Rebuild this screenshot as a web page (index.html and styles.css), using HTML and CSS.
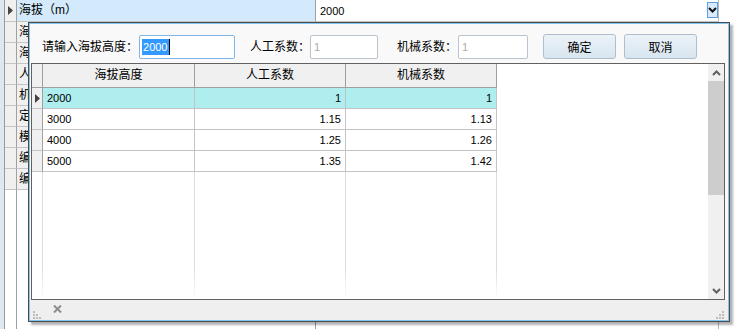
FILE: index.html
```html
<!DOCTYPE html>
<html lang="zh-CN">
<head>
    <meta charset="UTF-8">
    <title>海拔系数</title>
    <link rel="stylesheet" href="styles.css">
</head>
<body>

    <div class="sheet">
        <div class="edge"></div>
        <div class="rh"><svg width="5" height="9" viewBox="0 0 5 9"><path d="M0 0 L5 4.5 L0 9 Z" fill="#444"/></svg></div>
        <div class="c1 sel">海拔（m）</div>
        <div class="c2"><span class="num">2000</span><span class="drop"><svg width="9" height="6" viewBox="0 0 9 6"><path d="M1 1 L4.5 4.5 L8 1" fill="none" stroke="#111" stroke-width="2"/></svg></span></div>

        <div class="edge"></div><div class="rh"></div><div class="c1 ro">海</div><div class="c2"></div>
        <div class="edge"></div><div class="rh"></div><div class="c1 ro">海</div><div class="c2"></div>
        <div class="edge"></div><div class="rh"></div><div class="c1 ro">人</div><div class="c2"></div>
        <div class="edge"></div><div class="rh"></div><div class="c1 ro">机</div><div class="c2"></div>
        <div class="edge"></div><div class="rh"></div><div class="c1 ro">定</div><div class="c2"></div>
        <div class="edge"></div><div class="rh"></div><div class="c1 ro">模</div><div class="c2"></div>
        <div class="edge"></div><div class="rh"></div><div class="c1 ro">编</div><div class="c2"></div>
        <div class="edge"></div><div class="rh"></div><div class="c1 ro">编</div><div class="c2"></div>

        <div class="edge"></div><div class="rh fill"></div><div class="c1 fill"></div><div class="c2 fill"></div>
    </div>

    <!-- dropdown panel -->
    <div class="popup">
        <div class="popup-inner">
            <div class="toolbar">
                <span class="lbl">请输入海拔高度：</span>
                <div class="field focus"><span class="hl num">2000</span><span class="caret"></span></div>
                <span class="lbl gap">人工系数：</span>
                <div class="field f2"><span class="num dim">1</span></div>
                <span class="lbl gap2">机械系数：</span>
                <div class="field f3"><span class="num dim">1</span></div>
                <button class="btn ok">确定</button>
                <button class="btn">取消</button>
            </div>

            <div class="grid">
                <div class="table">
                    <div class="th rhc"></div>
                    <div class="th">海拔高度</div>
                    <div class="th">人工系数</div>
                    <div class="th">机械系数</div>
                    <div class="th blank"></div>

                    <div class="td rhc"><svg width="5" height="9" viewBox="0 0 5 9"><path d="M0 0 L5 4.5 L0 9 Z" fill="#444"/></svg></div>
                    <div class="td cur num">2000</div>
                    <div class="td cur num r">1</div>
                    <div class="td cur num r">1</div>
                    <div class="td blank"></div>

                    <div class="td rhc"></div>
                    <div class="td num">3000</div>
                    <div class="td num r">1.15</div>
                    <div class="td num r">1.13</div>
                    <div class="td blank"></div>

                    <div class="td rhc"></div>
                    <div class="td num">4000</div>
                    <div class="td num r">1.25</div>
                    <div class="td num r">1.26</div>
                    <div class="td blank"></div>

                    <div class="td rhc"></div>
                    <div class="td num">5000</div>
                    <div class="td num r">1.35</div>
                    <div class="td num r">1.42</div>
                    <div class="td blank"></div>

                    <div class="tf"></div>
                    <div class="tf"></div>
                    <div class="tf"></div>
                    <div class="tf"></div>
                    <div class="tf blank"></div>
                </div>
                <div class="vscroll">
                    <div class="arrow"><svg width="9" height="6" viewBox="0 0 9 6"><path d="M1 5 L4.5 1.5 L8 5" fill="none" stroke="#606060" stroke-width="2"/></svg></div>
                    <div class="thumb"></div>
                    <div class="track"></div>
                    <div class="arrow"><svg width="9" height="6" viewBox="0 0 9 6"><path d="M1 1 L4.5 4.5 L8 1" fill="none" stroke="#606060" stroke-width="2"/></svg></div>
                </div>
            </div>

            <div class="status">
                <svg class="grip" width="9" height="9" viewBox="0 0 9 9"><g fill="#bdbdbd"><rect x="0" y="1" width="2" height="2"/><rect x="0" y="4" width="2" height="2"/><rect x="3" y="4" width="2" height="2"/><rect x="0" y="7" width="2" height="2"/><rect x="3" y="7" width="2" height="2"/><rect x="6" y="7" width="2" height="2"/></g></svg>
                <svg class="close" width="9" height="8" viewBox="0 0 9 8"><path d="M1 0.5 L8 7.5 M8 0.5 L1 7.5" stroke="#8c8c8c" stroke-width="2"/></svg>
                <svg class="grip right" width="9" height="9" viewBox="0 0 9 9"><g fill="#bdbdbd"><rect x="7" y="1" width="2" height="2"/><rect x="7" y="4" width="2" height="2"/><rect x="4" y="4" width="2" height="2"/><rect x="7" y="7" width="2" height="2"/><rect x="4" y="7" width="2" height="2"/><rect x="1" y="7" width="2" height="2"/></g></svg>
            </div>
        </div>
    </div>

</body>
</html>
```

FILE: styles.css
```css
/* base */
html, body {
    margin: 0;
    padding: 0;
    background: #fff;
    color: #000;
    font-family: "Liberation Sans", "Noto Sans CJK SC", sans-serif;
    font-size: 12px;
    line-height: 16px;
}

body {
    position: relative;
    width: 735px;
    height: 329px;
    overflow: hidden;
}

.num {
    font-family: "Liberation Sans", sans-serif;
    font-size: 11px;
}

/* background property grid */
.sheet {
    display: grid;
    grid-template-columns: 5px 12px 299px 403px;
    grid-template-rows: 22px repeat(8, 21px) 1fr;
    height: 329px;
}

.sheet > div {
    box-sizing: border-box;
    border-right: 1px solid #a0a0a0;
    border-bottom: 1px solid #c4c4c4;
    overflow: hidden;
    white-space: nowrap;
}

.sheet .edge {
    background: #dde8f1;
    border-bottom: none;
    border-right-color: #9a9a9a;
}

.rh {
    background: #f0f0f0;
    display: flex;
    align-items: center;
    justify-content: center;
}

.c1 {
    padding: 2px 0 0 2px;
}

.c1.sel {
    background: #d3eafc;
}

.c1.ro {
    background: #f0f0f0;
}

.c2 {
    display: flex;
    justify-content: space-between;
    align-items: flex-start;
    padding: 3px 0 0 4px;
    border-right-color: #b8b8b8 !important;
}

.drop {
    box-sizing: border-box;
    width: 11px;
    height: 16px;
    margin-top: -1px;
    border: 1px solid #5b9fe0;
    background: #d9ebfa;
    display: flex;
    align-items: center;
    justify-content: center;
}

.sheet .fill {
    background: #fff;
    border-bottom: none;
}

/* popup */
.popup {
    position: absolute;
    left: 28px;
    top: 22px;
    width: 702px;
    height: 300px;
    box-sizing: border-box;
    border: 1px solid #4b4b4b;
    box-shadow: 3px 3px 2px rgba(0, 0, 0, 0.3);
}

.popup-inner {
    height: 100%;
    box-sizing: border-box;
    border: 1px solid #80c6ee;
    background: #f9f9f9;
    display: flex;
    flex-direction: column;
}

.toolbar {
    height: 39px;
    box-sizing: border-box;
    padding: 10px 0 0 12px;
    display: flex;
    align-items: flex-start;
}

.lbl {
    line-height: 24px;
    margin-top: 1px;
    margin-right: 1px;
}

.lbl.gap {
    margin-left: 15px;
    margin-right: 0;
}

.lbl.gap2 {
    margin-left: 19px;
    margin-right: 1px;
}

.field {
    box-sizing: border-box;
    width: 96px;
    height: 24px;
    margin-top: 1px;
    border: 1px solid #b9c3cd;
    border-radius: 2px;
    background: #fff;
    display: flex;
    align-items: center;
    padding-left: 2px;
}

.field.focus {
    border-color: #7fb5e9;
}

.field.f2 {
    width: 68px;
}

.field.f3 {
    width: 70px;
}

.hl {
    background: #3399ff;
    color: #fff;
    line-height: 16px;
    padding: 0 1px;
}

.caret {
    width: 1px;
    height: 16px;
    background: #000;
}

.dim {
    color: #aaa;
    padding-left: 1px;
}

.btn {
    box-sizing: border-box;
    width: 73px;
    height: 25px;
    margin-left: 15px;
    padding: 0;
    border: 1px solid #adbfcf;
    border-radius: 3px;
    background: linear-gradient(#ecf3f8, #d8e5ef);
    font-family: "Noto Sans CJK SC", sans-serif;
    font-size: 12px;
    color: #000;
}

.btn + .btn {
    margin-left: 8px;
}

/* list */
.grid {
    height: 237px;
    margin: 0 3px 0 1px;
    box-sizing: border-box;
    border: 1px solid #616161;
    background: #fff;
    display: flex;
}

.table {
    flex: 1;
    display: grid;
    grid-template-columns: 11px 152px 151px 151px 1fr;
    grid-template-rows: 24px repeat(4, 21px) 1fr;
}

.th, .td {
    box-sizing: border-box;
    border-right: 1px solid #c4c4c4;
    border-bottom: 1px solid #c4c4c4;
    white-space: nowrap;
}

.th {
    background: #f0f0f0;
    border-color: #a0a0a0;
    text-align: center;
    line-height: 23px;
}

.td {
    line-height: 20px;
    padding: 0 4px;
}

.td.r {
    text-align: right;
}

.td.cur {
    background: #afeeee;
}

.rhc {
    background: #f0f0f0;
    display: flex;
    align-items: center;
    justify-content: center;
    padding: 0;
    border-right-color: #a0a0a0;
}

.table .blank {
    background: #fff;
    border: none;
}

.tf {
    border-right: 1px solid;
    border-image: linear-gradient(#dcdcdc 75%, #fff) 1;
}

.vscroll {
    width: 16px;
    background: #f0f0f0;
    display: flex;
    flex-direction: column;
}

.arrow {
    height: 17px;
    display: flex;
    align-items: center;
    justify-content: center;
}

.thumb {
    height: 114px;
    background: #cdcdcd;
}

.track {
    flex: 1;
}

.status {
    flex: 1;
    background: #efefef;
    display: flex;
    align-items: center;
    padding: 0 4px 0 3px;
}

.grip {
    align-self: flex-end;
    margin-bottom: 1px;
}

.close {
    margin-left: 11px;
    margin-top: -3px;
}

.grip.right {
    margin-left: auto;
}
```
